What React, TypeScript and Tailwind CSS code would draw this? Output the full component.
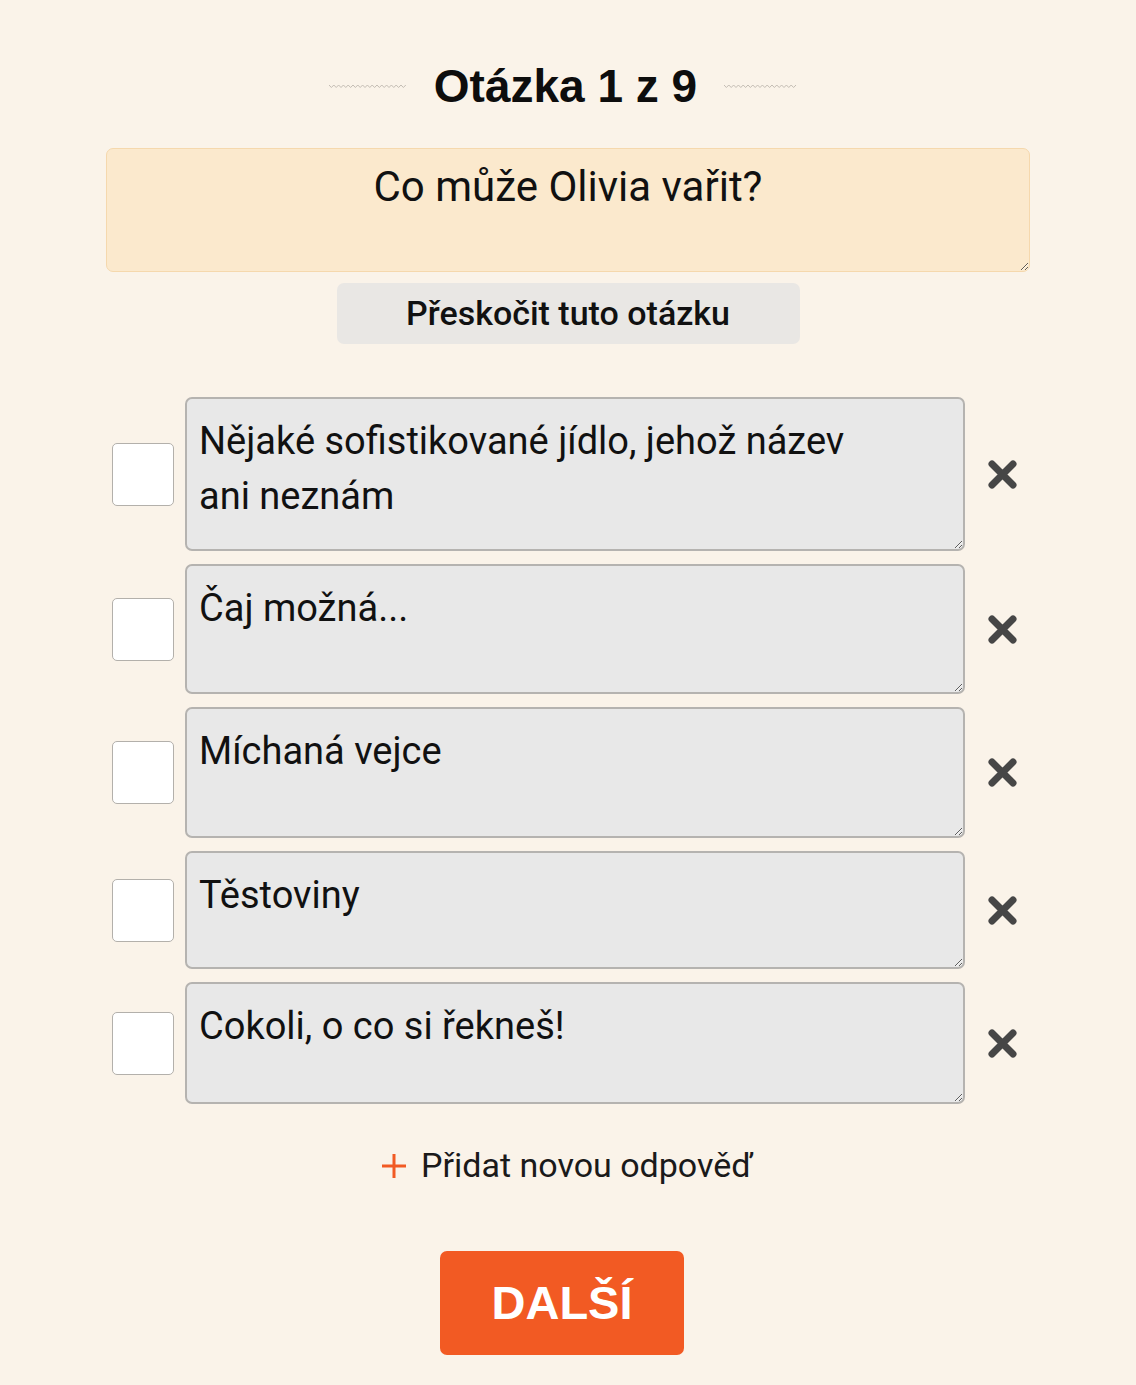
import React from "react";

const answers = [
  { text: "Nějaké sofistikované jídlo, jehož název\nani neznám", h: "h-[154px]" },
  { text: "Čaj možná...", h: "h-[130px]" },
  { text: "Míchaná vejce", h: "h-[131px]" },
  { text: "Těstoviny", h: "h-[118px]" },
  { text: "Cokoli, o co si řekneš!", h: "h-[122px]" },
];

function Wave({ w }: { w: number }) {
  const pts: string[] = [];
  const n = Math.floor(w / 2.4);
  for (let i = 0; i <= n; i++) {
    pts.push(`${(i * 2.4).toFixed(1)},${i % 2 === 0 ? 1 : 3.5}`);
  }
  return (
    <svg width={w} height="5" viewBox={`0 0 ${w} 5`} className="block">
      <polyline points={pts.join(" ")} fill="none" stroke="#bdb7ae" strokeWidth="0.9" />
    </svg>
  );
}

function XIcon() {
  return (
    <svg width="31" height="31" viewBox="0 0 31 31">
      <path d="M5 5 L26 26 M26 5 L5 26" stroke="#464646" strokeWidth="7" strokeLinecap="round" />
    </svg>
  );
}

export default function App() {
  return (
    <div className="min-h-[1385px] w-[1136px] bg-[#faf3e9] px-[106px] pt-[58px] font-['Roboto',sans-serif] text-[#111]">
      <div className="flex items-center justify-center pr-[9px]">
        <Wave w={78} />
        <h1 className="mx-[27px] font-['Liberation_Sans',sans-serif] text-[46px] font-bold leading-[56px] text-[#0d0d0d]">
          Otázka 1 z 9
        </h1>
        <Wave w={74} />
      </div>

      <div className="mt-[34px]">
        <textarea
          readOnly
          defaultValue="Co může Olivia vařit?"
          className="block h-[124px] w-[924px] rounded-[7px] border border-[#f5d8ad] bg-[#fbe9cd] px-4 pt-[12px] text-center font-['Roboto',sans-serif] text-[42px] leading-[52px] text-[#111] outline-none"
        />
      </div>

      <div className="mt-[11px] flex justify-center">
        <button className="h-[61px] w-[463px] rounded-[7px] bg-[#e9e7e4] font-['Roboto',sans-serif] text-[34px] font-medium text-[#111]">
          Přeskočit tuto otázku
        </button>
      </div>

      <div className="mt-[53px] flex flex-col gap-[13px]">
        {answers.map((a, i) => (
          <div key={i} className="flex items-center">
            <div className="ml-[6px] h-[63px] w-[62px] rounded-[5px] border border-[#b3b0ab] bg-white" />
            <textarea
              readOnly
              defaultValue={a.text}
              className={`ml-[11px] block ${a.h} w-[780px] rounded-[7px] border-2 border-[#b5b3b0] bg-[#e8e8e8] px-[12px] pt-[15px] font-['Roboto',sans-serif] text-[38px] leading-[55px] text-[#111] outline-none`}
            />
            <div className="flex w-[65px] justify-end pr-[12px]">
              <XIcon />
            </div>
          </div>
        ))}
      </div>

      <div className="mt-[36px] flex items-center justify-center gap-[14px] pr-[2px]">
        <svg width="26" height="26" viewBox="0 0 26 26">
          <path d="M13 1 V25 M1 13 H25" stroke="#f15a24" strokeWidth="3" />
        </svg>
        <span className="font-['Roboto',sans-serif] text-[34px] text-[#1a1a1a]">Přidat novou odpověď</span>
      </div>

      <div className="mt-[60px] flex justify-center pr-[12px]">
        <button className="h-[104px] w-[244px] rounded-[7px] bg-[#f25a23] font-['Liberation_Sans',sans-serif] text-[47px] font-bold text-white">
          DALŠÍ
        </button>
      </div>
    </div>
  );
}
